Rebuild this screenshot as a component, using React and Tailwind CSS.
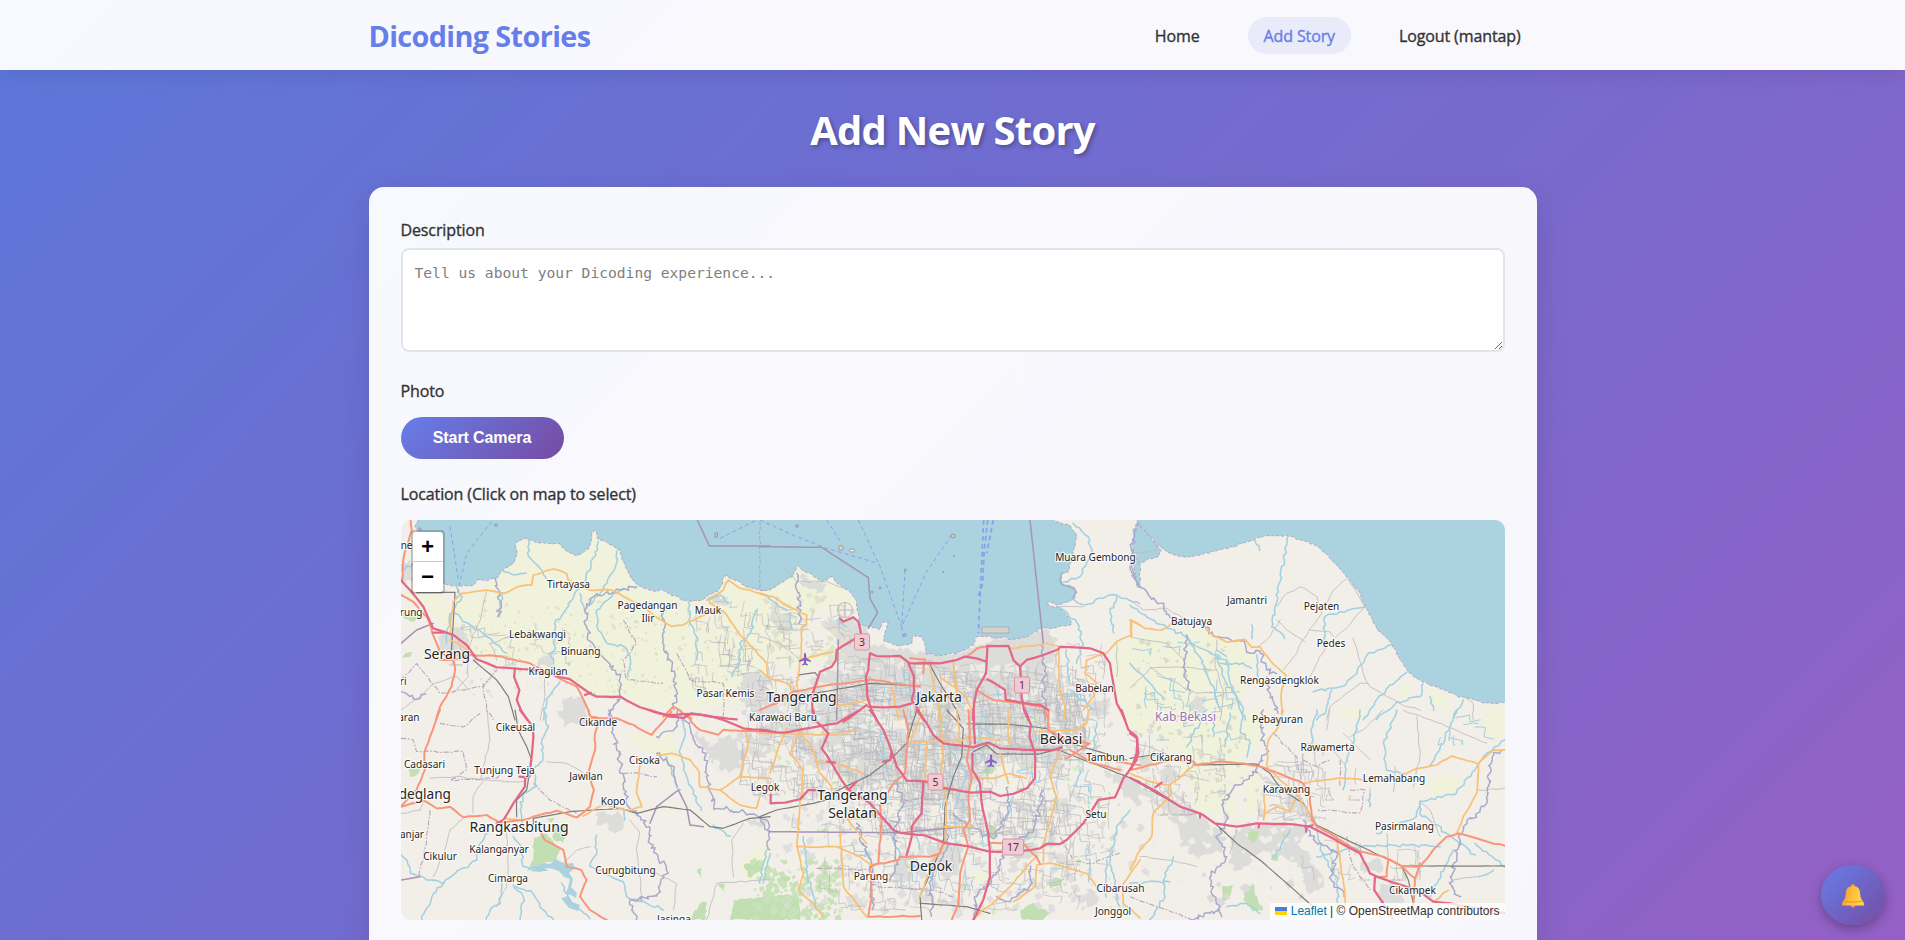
import React from "react";

/* ---------- map geometry: six sheets, three units per pixel ---------- */

const ORIGIN = { A: [390, 510], B: [390, 710], C: [760, 510], D: [760, 710], E: [1130, 510], F: [1130, 710] };

const SEA = {
  A: ["85,30 75,50 90,75 100,110 130,150 160,222 195,228 250,226 262,208 290,213 325,200 340,178 370,160 380,135 377,97 410,85 440,97 510,102 530,122 557,136 580,127 597,115 602,100 605,70 614,60 622,72 622,85 650,97 690,120 700,155 715,190 740,222 760,235 800,243 815,237 845,257 865,260 875,270 905,274 940,268 955,255 985,243 995,225 1000,203 1010,195 1020,205 1040,212 1060,225 1090,237 1110,240 1140,240 1140,20 85,20"],
  C: [
    "0,20 0,241 25,240 70,215 100,198 112,165 125,180 150,190 185,215 215,200 240,225 270,245 285,265 295,310 300,345 320,350 340,352 360,358 368,337 385,336 380,355 370,390 395,400 420,408 455,400 458,376 485,380 495,410 500,432 560,435 600,425 640,405 650,380 690,378 700,385 740,380 745,388 800,382 845,355 890,352 935,342 920,315 895,290 858,285 870,275 890,285 925,275 945,262 942,232 905,222 905,190 925,185 930,160 945,110 950,80 930,45 885,35 885,20",
    "1140,30 1118,60 1128,95 1110,150 1122,170 1130,230 1140,232",
  ],
  E: [
    "22,35 60,80 100,118 130,134 165,141 210,135 265,120 310,110 375,87 400,78 475,78 550,102 580,125 620,165 655,205 690,250 705,290 740,355 785,400 810,450 835,487 875,515 930,535 980,558 1020,565 1060,580 1130,577 1130,20 22,20",
    "22,40 5,100 10,130 28,160 50,150 85,140 95,122 60,80",
  ],
};

const FARM = {
  A: ["190,255 290,235 325,200 340,178 375,155 380,97 410,87 510,102 557,136 597,115 614,62 690,120 740,222 800,243 905,274 985,243 1010,197 1060,225 1140,240 1140,500 1040,520 1040,590 860,600 750,590 690,560 600,550 520,500 420,455 250,430 200,375", "33,250 160,250 180,350 140,330 90,270 33,262"],
  B: ["720,70 840,75 870,130 840,200 800,130 740,110", "1050,480 1110,400 1140,400 1140,500 1080,510"],
  C: ["0,241 70,215 112,170 150,190 240,225 290,280 230,300 190,290 110,350 115,500 60,450 0,470", "120,440 220,390 230,420 130,492", "1060,390 1140,400 1140,630 1090,630 1060,520"],
  D: ["660,140 710,140 720,180 680,205", "640,490 680,480 690,510 650,520", "1080,0 1140,0 1140,60 1100,50"],
  E: ["0,380 50,370 150,370 210,350 260,390 345,400 380,440 330,480 360,530 330,560 340,600 380,630 0,630", "40,215 80,195 85,220 50,232", "800,535 840,515 840,550 805,565", "900,540 960,555 950,600 910,590", "1060,590 1125,585 1125,630 1070,630"],
  F: ["0,0 400,0 390,100 330,130 360,180 300,230 330,330 200,300 160,200 100,80 0,60", "900,210 980,190 980,250 890,265", "1060,40 1125,0 1125,70 1080,100", "350,200 400,190 390,300 345,320", "620,0 720,0 690,30 640,20"],
};

const URBAN = {
  A: ["33,150 62,150 75,215 33,215", "150,370 225,345 235,400 240,440 200,440 150,420", "450,445 490,435 495,475 450,470", "520,565 575,560 590,595 560,630 520,630", "1050,520 1070,495 1110,480 1140,510 1140,630 1070,630 1050,580", "970,250 1015,260 1005,285 965,280"],
  B: ["500,0 580,0 590,35 520,50", "615,315 690,305 700,340 680,370 655,345 625,345", "900,60 980,85 1060,70 1080,110 1060,180 1000,190 940,120", "980,80 1140,60 1140,130 1080,150", "1060,330 1130,330 1110,365", "1100,180 1140,170 1140,280 1110,260"],
  C: ["125,188 175,215 205,225 190,250 130,230", "190,330 300,330 330,400 500,432 600,430 700,385 850,360 890,380 880,450 900,520 880,560 920,630 420,630 0,630 0,570 110,530 180,490 240,410", "30,290 90,310 95,370 50,350", "1000,570 1050,560 1050,610 970,630"],
  D: ["0,0 300,0 380,60 640,0 960,0 930,60 900,100 930,130 900,180 860,220 840,130 800,200 750,130 640,240 610,330 570,260 440,310 400,200 320,250 240,200 180,180 100,160 60,60 0,110", "500,400 560,400 610,420 600,480 560,520 530,470", "400,460 440,455 455,510 410,525", "740,400 830,400 820,440 770,460", "1030,180 1140,215 1140,290 1090,250", "980,540 1010,545 1010,590 980,590"],
  E: ["200,555 225,560 225,600 190,630 180,580"],
  F: ["0,205 80,240 130,270 200,310 270,355 280,420 210,445 150,400 130,340 60,260 0,240", "20,140 60,135 60,180 30,180", "80,190 115,160 150,200 120,230 170,280 220,320 120,260", "320,355 420,345 530,350 500,400 550,460 570,480 590,530 540,550 500,460 440,440 400,420 340,480 310,490 300,430", "390,190 440,220 500,260 560,320 555,345 500,310 420,240", "740,510 820,530 825,575 760,585", "690,455 755,450 760,480 700,490"],
};

const GREEN = {
  A: ["150,30 190,30 185,42 160,42", "45,430 68,425 60,442 38,445", "33,310 70,305 100,320 60,335"],
  B: ["430,385 470,372 510,415 500,450 460,460 410,482 430,440", "470,325 495,325 480,340", "490,350 530,350 520,400 490,390", "55,180 90,175 80,195 60,200", "920,480 935,475 930,505", "1060,465 1110,450 1120,480 1080,505", "1030,570 1140,560 1140,630 1020,630", "930,580 950,575 945,630 900,630", "985,520 1005,520 1000,545"],
  D: ["0,600 30,560 70,555 115,560 120,630 0,630", "170,350 200,340 200,365 170,365", "780,600 820,580 870,610 850,630 790,630", "860,510 920,500 900,525 870,535", "690,350 710,350 705,385 690,380", "665,165 700,160 700,190 670,200", "60,500 90,500 80,525 60,530", "200,530 235,540 230,560 205,550"],
  F: ["275,530 310,525 300,565 275,580", "345,535 370,520 380,560 400,600 370,605 340,570", "350,365 385,362 380,390 360,400", "460,370 480,365 475,390 455,395", "425,430 445,430 445,455 422,450", "815,485 830,490 828,510"],
};

const RIVER = {
  A: ["415,90 415,140 450,175 470,205", "335,180 370,195 410,190", "625,95 600,180 550,260 520,310 495,340 490,400 495,420 480,430 490,460", "683,120 680,160 640,240 585,300", "195,310 240,345 300,385 350,430", "335,250 328,320", "700,235 670,250 620,300 625,360 650,400 700,410 720,440 715,500", "895,275 900,340 920,380 920,450", "1100,300 1080,370 1050,400 1050,450 1025,500", "180,310 170,400", "510,515 470,570 460,630", "570,250 585,310", "950,270 990,255 1015,280", "200,220 215,260 180,320", "33,180 70,160"],
  B: ["460,0 475,50 455,100 460,140 430,180 440,230 400,250 390,300 395,340", "33,435 50,450 60,490 120,510 160,520 210,480 260,450 270,400 295,370", "160,520 130,550 95,630", "370,380 395,420 400,470 470,480", "335,520 330,580 300,600 290,630", "370,525 400,560 395,600 390,630", "375,530 430,550 450,590 490,630", "515,520 540,570 570,600 600,625", "620,375 615,440 600,470 700,515 710,560 760,575 820,600", "870,0 885,60 870,130 890,200 935,300", "700,295 705,330", "830,140 850,200 870,240", "970,345 1020,380", "1140,430 1120,520"],
  C: ["20,255 55,290 80,300", "905,220 960,200 995,130 985,80 940,40", "895,290 950,340 970,400 950,460", "930,265 975,285 1040,260 1070,255 1140,280", "1070,260 1050,310 1060,370", "90,310 95,360", "920,420 930,520", "230,330 260,350", "930,540 1000,600"],
  D: ["360,60 380,180", "470,380 480,420", "570,120 620,190 590,280", "760,260 740,330", "800,0 830,90", "960,180 950,230", "130,380 140,490 170,600", "20,420 0,520", "1110,300 1070,350 1050,460 1080,590", "1040,450 1040,560", "1010,40 1000,120", "510,460 520,540", "400,380 420,440", "660,40 660,90"],
  E: ["375,90 390,122", "473,80 462,150 435,290 425,350 450,365 465,385", "705,292 650,300 585,320 582,400", "550,545 640,530 680,490 710,435 785,402", "605,540 590,600 560,630", "830,487 780,525 735,580 700,630", "880,520 870,560 800,575 740,630", "0,285 80,340 160,375 210,440 250,530 270,600", "165,380 200,410 290,450 300,520 340,600", "260,420 290,440", "270,460 340,460 365,475", "0,460 60,520 100,565", "365,345 365,385", "380,435 385,500", "260,440 290,520 320,560 345,630", "900,560 910,600", "970,620 1000,570"],
  F: ["340,0 330,60 360,100 350,140", "560,0 545,70 550,110", "690,0 680,60 645,160 640,240", "800,0 760,100 770,180 820,190", "980,0 930,120 900,170", "720,250 720,290", "1125,90 1060,140 980,250 870,275 860,320 740,370", "560,440 690,410 830,405 930,410", "560,350 570,420 620,500 625,610", "480,360 450,420 430,440", "130,440 100,510 105,560 60,630", "0,520 120,515", "290,590 350,580 390,610", "870,280 870,310 990,400 1035,435", "1035,400 1125,470", "1045,500 1090,480", "970,420 920,520 900,560", "255,0 250,80", "300,10 285,110", "230,0 170,110"],
};

const BOUNDARY_RIVER = {
  A: ["740,230 680,240 610,260 585,300 590,350 605,400 640,440 690,500 690,560 665,600 660,630", "820,310 820,390 845,470 860,540 850,600", "315,205 330,250 325,320", "33,545 80,570 105,550"],
  B: ["660,0 670,60 685,130 700,200 715,290 780,350 780,400 830,480 800,560 720,570 740,630", "885,20 910,80 945,140 955,220 970,290 1080,310 1130,330 1140,420", "800,80 860,50 860,0", "800,130 850,170 860,230"],
  C: ["110,190 115,250 118,340", "905,190 905,225 945,240 940,265", "1128,60 1110,150 1130,200", "850,400 855,630"],
  D: ["410,220 430,280 400,360 410,450 390,510", "290,340 310,400 340,480 335,600", "850,240 830,330 800,380 740,410 720,480 650,560 640,630", "560,360 560,420 510,500 515,620", "580,310 620,350 700,385 740,320 745,230", "710,560 750,575 815,520 810,470", "0,320 30,365"],
  E: ["0,170 20,220 55,250 100,290 120,325", "215,345 250,375 345,400 350,425 390,420 410,480 440,490", "410,500 420,550 445,610", "170,375 160,470 180,540"],
  F: ["400,0 395,70 410,130 370,195 310,230 280,280 290,330 260,380 290,440 240,500 260,580 275,620", "1115,120 1085,140 1070,280 1000,350 980,430 960,520 990,560", "520,330 550,390 620,430 600,500 640,560", "190,630 270,600"],
};

const ADMIN = {
  A: ["922,30 958,108 1140,108", "33,400 80,360 130,340"],
  C: ["0,110 185,112 325,203 330,265 353,308 325,355", "810,30 850,400", "230,630 235,390"],
  B: ["780,340 800,290 865,240 890,290 900,345 940,350", "33,510 90,500"],
  D: ["30,365 420,368 620,350"],
};

const ADMIN_DASH = {
  A: ["33,510 80,460 150,550 280,530 320,480", "280,520 290,600 310,630", "700,330 740,400 700,450 710,510 820,520", "860,430 900,510 1000,520 1000,620"],
  B: ["33,85 70,90 80,125 220,125 230,180 180,210 320,205 350,180", "120,300 110,400 85,500", "430,220 480,270 560,310", "150,40 220,50 270,10", "700,190 750,190 800,200"],
  D: ["170,475 330,480 350,530 430,535 520,540 580,560", "900,380 940,455 1000,460 1080,430", "430,270 520,265"],
  F: ["430,70 500,140 515,220", "630,150 630,230", "660,240 705,240 690,310 560,300", "650,380 670,470 720,540", "0,560 110,600 190,630", "520,150 560,170 600,150"],
};

const RAIL = {
  A: ["80,247 195,247 183,440", "250,450 320,510 355,560 375,630"],
  B: ["375,0 385,60 410,110 425,150 410,240 380,270 380,320", "430,345 430,325 540,305 690,295 740,310 820,290 900,300 960,350 1000,355 1080,325 1140,320"],
  C: ["165,550 330,520 480,528", "115,495 165,488 175,500 160,545", "510,465 540,520 590,600 600,630"],
  D: ["0,320 50,300 160,280 200,270", "215,250 330,195 400,140 440,100 470,0", "605,140 580,200 555,290 550,400 480,560 485,630", "480,580 620,590 690,610", "620,42 740,42 860,55 900,90 1100,150", "560,0 610,55 605,140", "640,125 680,105 710,132 840,132 890,118 1140,215"],
  F: ["0,145 100,130", "190,165 380,162 420,190 455,240 520,280 560,345 620,375 815,468 1125,468", "815,468 835,510 850,580", "0,203 150,290 220,315 255,340 320,400 390,450 550,590"],
};

const PRIMARY = {
  A: ["180,375 185,310 190,275 215,250 290,240 345,250 385,230 425,225 430,195 490,177 530,190 535,210 600,240 665,240 700,260 745,280 790,315 845,350 880,345 930,320 985,295 1010,315 1050,375 1080,405 1130,460 1133,500", "955,265 1000,240 1015,210 1050,235 1080,240 1140,260", "955,265 960,280 990,300", "180,390 250,430"],
  B: ["800,135 845,130 900,150 925,180 930,230 990,240 1050,200 1140,205", "990,240 1050,285 1100,295 1110,260", "1065,60 1075,100 1050,195", "750,165 740,250 755,290 720,300 640,285 580,318", "345,325 400,330"],
  C: ["0,252 40,260 70,280 140,315 140,345 125,350 125,430 110,530", "0,480 30,505 80,520 120,555", "750,415 860,400 900,410", "895,415 900,540 915,590 910,630", "1140,345 1113,330 1115,375 1070,395 1040,430 980,450 975,490 1010,520 1000,560 970,600", "510,470 525,540 545,630", "580,450 590,550", "395,530 410,600 415,630", "120,450 220,425", "540,500 620,560 640,620", "230,590 320,570"],
  D: ["80,55 60,100 30,190", "110,60 150,100 180,190 215,230 215,250", "120,60 90,130 130,180 110,400 130,490 115,540 160,580 190,620", "110,410 230,410 300,440 340,470", "230,325 330,325 350,300", "260,325 320,400", "240,370 250,530 320,620", "0,70 75,70 220,75 290,62", "450,95 600,95 625,80 720,90", "450,95 490,0", "500,95 495,210", "535,0 550,90 545,200 560,270 555,400 520,450 480,560", "745,0 745,100", "820,65 950,60 980,40 985,0", "640,200 700,205 750,190 800,205", "720,130 745,220", "905,110 870,200 890,260 870,340 850,400 850,455", "830,465 870,460 910,470 980,490 1010,530", "1140,450 1090,520 1090,580 1140,625", "830,440 750,530 720,560 640,625", "830,470 825,530 760,575", "550,350 640,350", "180,150 260,170 310,190", "600,100 590,0"],
  E: ["0,330 45,355 95,360 125,340 165,335", "220,345 235,365 290,397 345,388 365,412 390,410 420,450 468,495 455,540 455,610", "2,330 4,380"],
  F: ["460,0 440,60 415,90 410,165", "0,190 60,215 120,225 195,165", "120,225 125,250 70,310 65,380 30,420 0,480", "410,170 455,215 500,250 555,340", "400,240 405,290 400,330", "405,310 440,290 480,305 495,270", "525,220 620,205 700,210 770,215 850,180 920,165 965,138 1045,162 1090,120 1125,120", "1045,162 1040,250 1000,320 980,370", "620,380 630,450 645,560 640,630", "910,575 955,540"],
};

const TRUNK = {
  A: ["62,30 65,60 50,110 40,150 36,215", "33,255 70,275 90,300 110,320 140,400 150,425 190,450 195,480 185,530 150,590 138,630", "150,450 190,450 240,435 320,438 420,460 490,495 560,530 585,580 605,625 640,628", "820,620 850,590 905,625"],
  B: ["150,0 120,80 103,130 105,180 80,240 33,290", "33,290 100,270 140,295 180,290 220,322 290,315 330,340 400,330 500,302 560,322 600,290 612,240 595,190 615,120 615,70 630,25 600,20 595,0", "630,25 680,25 730,45 785,75 845,5", "885,15 930,60 985,75 1000,60 1140,65", "450,360 465,390 520,420 530,470 575,480 590,510 570,560 600,600 650,630"],
  C: ["100,545 180,530 250,520 330,508 420,522 480,530", "0,600 50,580 100,545", "450,445 495,448 490,490", "620,440 650,415 680,410", "650,540 700,570 780,580 850,590 865,630"],
  D: ["430,0 445,60 435,190 410,210 385,245", "865,0 865,60 920,90 990,100 920,145", "930,120 1000,160 1080,180", "360,285 365,330 355,460 330,470 335,560 325,620 480,618", "340,465 415,450 420,440 510,440 540,430 550,400", "625,0 630,100 620,150 635,200 625,260 630,330 610,360 625,410 600,490 595,580 575,630", "690,398 790,400 830,440 840,462", "1070,155 1140,165"],
  F: ["0,180 60,165 130,150 190,155 200,165 260,155 340,160 400,172 470,200 520,220 540,260 545,330 560,350 600,370 680,420 760,440 815,468 855,505 850,590", "815,470 870,470 910,420 950,380 985,370 1060,392 1125,408", "855,505 870,460", "740,500 770,500 775,450"],
};

const MOTORWAY = {
  A: ["33,210 60,240 100,290 130,355 190,375 230,405 260,448 320,472 420,478 490,495 540,508 600,550 620,560 690,560 750,592 840,620 880,624 905,610 960,620 1040,628", "375,475 372,500 388,540 380,570 395,605 412,630", "130,368 160,368", "585,555 602,548"],
  B: ["780,0 830,15 905,12 960,18 1000,30 1060,55 1140,62", "390,0 428,50 430,80 418,200 405,205 405,230 370,280 340,330 320,340", "388,200 410,202"],
  C: ["240,325 250,335 280,322 295,335 303,375 270,395 230,420 228,450 215,470 180,485 175,500 165,530 155,560 160,630", "330,430 325,480 318,500 322,560 335,600 350,630", "330,430 350,438 420,438 450,460 540,460 590,450 615,440 650,445 680,455 682,408 745,408 760,450 780,470 800,450 850,435 895,418 900,410 990,415 1030,430 1050,460 1060,520 1070,580 1095,630", "445,460 462,500 462,545 455,570 470,590 490,630", "455,580 420,590 360,592 325,590", "680,458 678,490 650,540 642,580 638,630", "682,508 735,540 737,570 785,578 840,585 865,600", "780,470 785,560 792,600 805,630", "320,585 300,600 250,635"],
  D: ["0,62 75,68 160,52 230,40 300,0", "470,0 500,40 520,75 550,100 590,105 640,112 660,105 685,98 720,115 800,120 880,120 905,112", "640,0 645,100", "795,0 812,45 808,80 825,130 825,205 800,235 760,252 720,258 690,245 635,248 555,235 500,215 440,212 410,170 395,125 370,60 330,0", "160,0 165,30 205,70 185,115 215,160 245,210 265,240 300,260 330,280 365,320 400,360 420,368 490,375 560,400 630,410 690,425 760,425 840,415 860,402 900,402 920,390 970,340 1015,270 1065,262 1090,205 1130,150", "32,255 32,280 75,278 120,268 145,240 190,242", "490,215 485,310 455,350 455,380 440,435", "637,130 637,180 660,220 665,280 685,370 690,440 690,500 670,570 640,630", "265,240 290,215", "395,125 390,150 370,155", "1085,0 1105,60 1130,80 1135,130 1125,155", "202,155 225,158"],
  F: ["0,70 22,85 20,130 5,175", "0,203 80,245 150,290 220,315 255,340 320,350 380,340 490,343 540,350 570,365 690,430 720,490 740,500 790,518 830,530 870,545 910,575 960,580 1125,610", "735,500 733,540 760,580 790,630", "75,232 95,218", "210,315 210,322", "388,342 386,352", "528,365 530,350 548,346"],
};

const FERRY = {
  A: ["305,35 230,130 200,260", "180,50 205,210", "990,85 1100,30"],
  C: ["0,30 110,80 200,115 355,160", "200,30 245,100", "295,30 360,170 425,350", "435,180 425,350", "575,75 500,185 425,350 430,390"],
};

const FERRY_BOLD = { C: ["671,30 663,200 655,370", "683,30 672,130 668,220 655,260", "700,30 680,130"] };

const MINOR = {
  A: ["290,245 270,330 245,390 230,430", "33,600 90,560 130,520 200,500 235,540", "360,380 300,400 320,450", "230,450 235,500 190,550", "465,500 465,560 450,630"],
  B: ["290,0 300,90 280,170 270,210", "470,155 530,160 590,195", "120,205 200,200 290,210 400,215", "33,310 90,300 100,270", "220,325 180,360 160,430 130,500", "345,350 355,430 350,530 320,590", "600,410 560,420 520,460", "720,330 750,370 740,420 755,560", "1060,340 1025,390 1030,500", "1140,510 980,520 950,630", "280,215 250,260 250,310", "760,470 860,520 850,600"],
  C: ["0,380 60,400 120,450", "70,170 110,215 200,215 260,240", "1070,400 1070,500", "900,290 970,290"],
  E: ["440,290 470,250 510,230 560,260 575,310 520,390 500,430 460,480", "650,207 610,240 585,285", "655,210 705,290 670,330 630,370 590,410 560,460 540,500", "440,330 470,360 525,395", "450,330 420,380 390,405", "540,360 600,365 610,380", "668,385 685,440 700,490 720,530 830,590 870,600", "590,630 600,590 690,520 715,520", "0,380 110,400 165,450 160,500", "0,535 60,475 140,470 260,480", "60,470 100,500 200,550 330,545", "260,390 255,470 280,540 270,630", "0,270 40,300 110,295 160,325", "5,130 80,120 75,95", "1000,560 1030,580 1030,630"],
  F: ["590,60 600,0", "640,70 720,150", "820,0 950,50 1070,100", "795,170 790,245", "860,20 870,140 850,230", "870,275 900,300 930,380", "1045,240 1125,235", "690,400 700,460", "520,100 600,110 640,160", "0,90 150,150", "30,440 120,450 200,470", "760,0 700,60 660,80", "770,370 775,440", "970,510 1040,500", "320,360 300,430"],
};

/* ---------- deterministic detail ---------- */

const randomizer = (seed) => {
  let s = seed;
  return () => {
    s = (s * 1664525 + 1013904223) % 4294967296;
    return s / 4294967296;
  };
};

const parse = (str) => str.split(" ").map((p) => p.split(",").map(Number));

const wiggle = (str, amp, step, close) => {
  const pts = parse(str);
  const rnd = randomizer(Math.round(pts[0][0] * 31 + pts[0][1] * 17 + pts.length * 7));
  if (close) pts.push(pts[0]);
  let d = `M${pts[0][0]} ${pts[0][1]}`;
  for (let i = 1; i < pts.length; i++) {
    const [ax, ay] = pts[i - 1];
    const [bx, by] = pts[i];
    const n = Math.max(1, Math.round(Math.hypot(bx - ax, by - ay) / step));
    for (let k = 1; k <= n; k++) {
      const t = k / n;
      const j = k === n ? 0.3 : 1;
      const x = ax + (bx - ax) * t + (rnd() - 0.5) * amp * j;
      const y = ay + (by - ay) * t + (rnd() - 0.5) * amp * j;
      d += `L${x.toFixed(1)} ${y.toFixed(1)}`;
    }
  }
  return close ? d + "Z" : d;
};

const streets = (seed, x, y, w, h, n) => {
  const rnd = randomizer(seed);
  let d = "";
  for (let i = 0; i < n; i++) {
    let px = x + rnd() * w;
    let py = y + rnd() * h;
    const upright = rnd() > 0.42;
    d += `M${px.toFixed(1)} ${py.toFixed(1)}`;
    const turns = 2 + Math.floor(rnd() * 4);
    for (let k = 0; k < turns; k++) {
      const along = 3 + rnd() * 9;
      const cross = (rnd() - 0.5) * 5;
      const flip = k % 3 === 2;
      if (upright !== flip) {
        px += cross;
        py += along;
      } else {
        px += along;
        py += cross;
      }
      px = Math.min(px, x + w);
      py = Math.min(py, y + h);
      d += `L${px.toFixed(1)} ${py.toFixed(1)}`;
    }
  }
  return d;
};

const specks = (seed, x, y, w, h, n, size) => {
  const rnd = randomizer(seed);
  let d = "";
  for (let i = 0; i < n; i++) {
    const px = x + rnd() * w;
    const py = y + rnd() * h;
    const s = size * (0.4 + rnd());
    d += `M${px.toFixed(1)} ${py.toFixed(1)}l${s.toFixed(1)} ${(-s * rnd()).toFixed(1)}l${(s * rnd()).toFixed(1)} ${s.toFixed(1)}l${(-s).toFixed(1)} ${(s * 0.6).toFixed(1)}z`;
  }
  return d;
};

function Layer({ data, amp = 0, step = 18, close = false, ...rest }) {
  return (
    <g strokeLinejoin="round" strokeLinecap={rest.strokeDasharray ? "butt" : "round"} fill={close ? rest.fill : "none"} {...rest}>
      {Object.entries(data).map(([key, lines]) => (
        <g key={key} transform={`translate(${ORIGIN[key][0]} ${ORIGIN[key][1]}) scale(0.33333)`}>
          {lines.map((l, i) => (
            <path key={i} d={wiggle(l, amp, step, close)} />
          ))}
        </g>
      ))}
    </g>
  );
}

const TOWNS = [
  [568.5, 587.5, "Tirtayasa"], [647.5, 609, "Pagedangan"], [648, 622, "Ilir"], [708, 614, "Mauk"],
  [537.5, 638, "Lebakwangi"], [580.5, 654.5, "Binuang"], [548, 674.5, "Kragilan"], [725.5, 697, "Pasar Kemis"],
  [515.5, 730.5, "Cikeusal"], [598, 726, "Cikande"], [424.5, 767.5, "Cadasari"], [504.5, 773.5, "Tunjung Teja"],
  [586, 780, "Jawilan"], [644.5, 764, "Cisoka"], [613, 804.5, "Kopo"], [499, 853, "Kalanganyar"],
  [440, 860, "Cikulur"], [508, 881.5, "Cimarga"], [625.5, 874, "Curugbitung"], [674, 923, "Jasinga"],
  [765, 791, "Legok"], [783, 720.5, "Karawaci Baru"], [871, 880, "Parung"], [1095.5, 560.5, "Muara Gembong"],
  [1094.5, 691.5, "Babelan"], [1105.5, 760.5, "Tambun"], [1096, 817.5, "Setu"], [1120.5, 891.5, "Cibarusah"],
  [1113, 915, "Jonggol"], [1191.5, 624.5, "Batujaya"], [1247, 604, "Jamantri"], [1321.5, 609.5, "Pejaten"],
  [1331, 647, "Pedes"], [1279.5, 684, "Rengasdengklok"], [1277.5, 723, "Pebayuran"], [1327.5, 750.5, "Rawamerta"],
  [1171, 760.5, "Cikarang"], [1286.5, 792.5, "Karawang"], [1394, 782, "Lemahabang"], [1404.5, 830, "Pasirmalang"],
  [1412.5, 893.5, "Cikampek"],
];
const EDGE_TOWNS = [[412.5, 549, "ne"], [422.5, 616, "rung"], [406.5, 685, "ri"], [419.5, 720.5, "aran"], [424, 837.5, "anjar"]];
const CITIES = [[447, 658.5, "Serang"], [801.5, 702, "Tangerang"], [939, 702, "Jakarta"], [1061, 744, "Bekasi"], [852.5, 800, "Tangerang"], [852.5, 818, "Selatan"], [931, 871, "Depok"], [519, 832, "Rangkasbitung"]];
const SHIELDS = [[862, 642, "3", 16], [1022, 685, "1", 16], [935.5, 782, "5", 16], [1013, 847, "17", 22]];

function Plane({ x, y }) {
  return (
    <path
      transform={`translate(${x} ${y})`}
      fill="#8461c4"
      d="M0-6.5Q1.1-6 1.1-3.5V-1.2L6 1.8V3.1L1.1 1.6V4.2L3 5.6V6.5L0 5.7L-3 6.5V5.6L-1.1 4.2V1.6L-6 3.1V1.8L-1.1-1.2V-3.5Q-1.1-6 0-6.5Z"
    />
  );
}

function MapCanvas() {
  return (
    <svg className="block h-full w-full" viewBox="401 520 1104 400" preserveAspectRatio="none">
      <rect x="400" y="519" width="1106" height="402" fill="#f2efe9" />
      <Layer data={FARM} close amp={9} step={14} fill="#f0f2db" />
      <Layer data={URBAN} close amp={20} step={9} fill="#dcdcdb" />
      <Layer data={GREEN} close amp={7} step={10} fill="#c2dfb3" />
      <path d={specks(5, 460, 600, 280, 95, 260, 2)} fill="#dfe0cf" />
      <path d={specks(15, 760, 595, 90, 70, 90, 4)} fill="#e2e3cf" />
      <path d={specks(25, 1130, 640, 110, 160, 140, 3)} fill="#dcdccb" />
      <path d={specks(7, 770, 660, 300, 170, 420, 6)} fill="#f0ede6" opacity="0.9" />
      <path d={specks(17, 690, 700, 90, 110, 120, 5)} fill="#f0ede6" />
      <path d={specks(18, 1130, 770, 220, 110, 160, 4)} fill="#f0ede6" />
      <path d={specks(8, 780, 790, 300, 120, 240, 5)} fill="#dedddb" opacity="0.9" />
      <path d={specks(9, 765, 700, 330, 210, 110, 3)} fill="#d3ebc0" />
      <path d={specks(10, 1060, 720, 90, 190, 70, 4)} fill="#dfdedc" />
      <path d={specks(11, 745, 860, 90, 60, 150, 4)} fill="#c9e2ba" />
      <path d={specks(12, 1200, 790, 100, 110, 30, 5)} fill="#dddcda" />
      <Layer data={SEA} close amp={5} step={9} fill="#aad3df" stroke="#a99bb9" strokeWidth="2.4" strokeDasharray="10 5" />
      <path d="M530 871l6-5 8-3 6 1 6-5 5 3 5 2 7-1 2 5-6 5 4 6-2 8 6 6-1 5-5-3-6-1 3-6 2-9-6-2-5-6-6-2-6-1-6 4z" fill="#aad3df" />
      <path d="M561 898l8-2 3 6 8 3-2 6-9-3z" fill="#aad3df" />
      <rect x="982" y="627" width="27" height="6" fill="#d5d3ca" stroke="#a99bb9" strokeWidth="0.7" />
      <g fill="none" stroke="#bdbdc0" strokeWidth="0.7">
        <path d={streets(21, 905, 662, 180, 88, 230)} />
        <path d={streets(22, 790, 690, 160, 110, 220)} />
        <path d={streets(23, 860, 735, 210, 100, 220)} />
        <path d={streets(24, 835, 655, 80, 45, 60)} />
        <path d={streets(26, 740, 675, 60, 120, 60)} />
        <path d={streets(27, 820, 800, 260, 110, 120)} />
        <path d={streets(28, 1055, 640, 50, 120, 60)} />
        <path d={streets(29, 1145, 735, 80, 80, 40)} />
        <path d={streets(30, 1255, 760, 70, 60, 30)} />
        <path d={streets(31, 440, 625, 130, 40, 20)} />
        <path d={streets(32, 690, 600, 100, 80, 34)} />
        <path d={streets(33, 765, 600, 85, 50, 26)} />
        <path d={streets(34, 1050, 780, 60, 100, 25)} />
        <path d={streets(35, 1300, 830, 120, 50, 18)} />
      </g>
      <g fill="none" stroke="#a9a0c0" strokeWidth="0.9" opacity="0.6">
        <path d={streets(41, 790, 670, 270, 160, 60)} />
        <path d={streets(42, 690, 610, 80, 80, 18)} />
        <path d={streets(43, 1290, 740, 80, 60, 14)} />
      </g>
      <g fill="none" stroke="#a3cfe0" strokeWidth="1">
        <path d={streets(51, 850, 670, 240, 220, 60)} />
        <path d={streets(52, 1130, 640, 110, 100, 18)} />
        <path d={streets(53, 1440, 715, 60, 30, 8)} />
      </g>
      <circle cx="845" cy="610" r="7.500" fill="none" stroke="#b9b9bb" />
      <path d="M837.500 610h15M845 602.500v15" stroke="#b9b9bb" />
      <Layer data={MINOR} amp={5} stroke="#bfbcbe" strokeWidth="2.6" />
      <Layer data={ADMIN_DASH} amp={6} stroke="#bba6bf" strokeWidth="3.4" strokeDasharray="16 5 5 5" />
      <Layer data={RIVER} amp={9} step={11} stroke="#a3d0e1" strokeWidth="4.6" />
      <Layer data={BOUNDARY_RIVER} amp={15} step={8} stroke="#a9a9cb" strokeWidth="4.4" />
      <Layer data={ADMIN} amp={0} stroke="#a793b3" strokeWidth="4.5" />
      <Layer data={FERRY} stroke="#8099ea" strokeWidth="2.6" strokeDasharray="12 9" />
      <Layer data={FERRY_BOLD} stroke="#86a0ea" strokeWidth="5" strokeDasharray="14 10" />
      <Layer data={RAIL} amp={1} stroke="#7f7d7b" strokeWidth="3.6" />
      <Layer data={PRIMARY} amp={4} stroke="#f9c176" strokeWidth="5.2" />
      <Layer data={TRUNK} amp={3} stroke="#f9967a" strokeWidth="6" />
      <Layer data={MOTORWAY} amp={2} step={26} stroke="#e56786" strokeWidth="6.8" />
      <g fill="none" stroke="#9b8cab" strokeWidth="0.9">
        <circle cx="953" cy="536" r="2" fill="#cfcfb0" /><circle cx="841" cy="548" r="2.4" fill="#d7d9b5" />
        <ellipse cx="852" cy="550.5" rx="2.6" ry="1.6" fill="#f2efe9" /><circle cx="797" cy="526" r="1.4" />
        <circle cx="905" cy="570" r="1" /><circle cx="872" cy="592" r="1" /><circle cx="880" cy="588" r="1" />
        <circle cx="954" cy="556" r=".6" /><circle cx="943" cy="572" r=".6" /><rect x="715" y="533" width="2.4" height="4" />
        <circle cx="905" cy="635" r="1.4" /><circle cx="420" cy="529" r="1.2" /><circle cx="496" cy="525" r="1.3" />
      </g>
      <Plane x={805} y={659} />
      <Plane x={991} y={760.5} />
      {SHIELDS.map(([x, y, t, w]) => (
        <g key={t}>
          <rect x={x - w / 2 + 0.5} y={y - 8} width={w - 1} height="16" rx="1.6" fill="#edccd3" stroke="#d994a6" />
          <text x={x} y={y + 4} textAnchor="middle" fontFamily="Noto Sans, sans-serif" fontSize="10.5" fill="#75203f">{t}</text>
        </g>
      ))}
      <g fontFamily="Noto Sans, sans-serif" textAnchor="middle" fill="#262626" stroke="#ffffff" strokeOpacity="0.75" strokeWidth="2.4" strokeLinejoin="round" style={{ paintOrder: "stroke" }}>
        {TOWNS.map(([x, y, t]) => (
          <text key={t} x={x} y={y} fontSize="10.1">{t}</text>
        ))}
        {EDGE_TOWNS.map(([x, y, t]) => (
          <text key={t} x={x} y={y} fontSize="10" textAnchor="end">{t}</text>
        ))}
        {CITIES.map(([x, y, t]) => (
          <text key={t + y} x={x} y={y} fontSize="14">{t}</text>
        ))}
        <text x="451" y="799" fontSize="13.6" textAnchor="end">deglang</text>
        <text x="1185.5" y="720.5" fontSize="12" fill="#9c72a6">Kab Bekasi</text>
      </g>
    </svg>
  );
}

function Bell() {
  return (
    <svg className="h-6 w-[22px]" viewBox="0 0 22 24">
      <defs>
        <linearGradient id="bell" x1="0" x2="1" y1="0" y2="0.25">
          <stop offset="0" stopColor="#ee9230" />
          <stop offset="0.5" stopColor="#fdbb38" />
          <stop offset="1" stopColor="#ffd54c" />
        </linearGradient>
      </defs>
      <circle cx="11" cy="21.4" r="2.3" fill="#f0807a" />
      <circle cx="11" cy="1.6" r="1.5" fill="#f5a93a" />
      <path fill="url(#bell)" d="M11 2C6 2 4 5 3.800 9.500C3.700 13 3 15 1.200 16.800Q0 18 0 21.600H22Q22 18 20.800 16.800C19 15 18.300 13 18.200 9.500C18 5 16 2 11 2Z" />
      <path fill="#f39c2e" d="M1.800 16.500Q11 18.600 20.200 16.500L21.200 17.800Q11 20 0.800 17.800Z" />
    </svg>
  );
}

const UI = "font-['Open_Sans','Noto_Sans',sans-serif]";
const MEDIUM = "font-medium tracking-[-0.12px] [-webkit-text-stroke:0.35px_currentColor]";
const LABEL = `block text-base leading-[25.6px] text-[#333333] ${MEDIUM}`;

export default function App() {
  return (
    <div className={`relative h-[940px] overflow-hidden bg-[linear-gradient(135deg,#5c77d9_0%,#6c6ed2_32%,#7a69cc_62%,#9560c6_100%)] ${UI}`}>
      <header className="relative h-[70px] bg-[linear-gradient(135deg,#f7f9fe,#f8f8fd_40%,#f9f8fd)] shadow-[0_2px_20px_rgba(0,0,0,0.1)]">
        <div className="mx-auto flex h-full w-[1168px] items-center justify-between">
          <div className="pt-0.5 text-[28.8px] font-bold tracking-[-0.62px] whitespace-nowrap text-[#667eea]">Dicoding Stories</div>
          <nav className={`flex items-center gap-8 text-base text-[#333333] ${MEDIUM}`}>
            <a className="rounded-[20px] px-4 pt-[9px] pb-[7px] leading-[21px]">Home</a>
            <a className="rounded-[20px] bg-[#e9ebfa] px-4 pt-[9px] pb-[7px] leading-[21px] text-[#667eea]">Add Story</a>
            <a className="rounded-[20px] px-4 pt-[9px] pb-[7px] leading-[21px]">Logout (mantap)</a>
          </nav>
        </div>
      </header>
      <main className="mx-auto w-[1168px] pt-[29px]">
        <h1 className="text-center text-[40px] leading-[61px] font-bold tracking-[-0.75px] text-white [text-shadow:2px_2px_4px_rgba(0,0,0,0.3)]">Add New Story</h1>
        <form className="mt-[27px] h-[900px] rounded-[15px] bg-[linear-gradient(135deg,#f6f9fe,#f9f8fd_35%,#f7f6fc)] p-8 shadow-[0_8px_32px_rgba(0,0,0,0.1)]">
          <label className={`${LABEL} -mt-px`}>Description</label>
          <textarea
            className="mt-1 block h-[104px] w-full resize-y rounded-lg border-2 border-[#e1e5e9] bg-white p-3 font-['DejaVu_Sans_Mono',monospace] text-[14.610px] placeholder:text-[#808080]"
            placeholder="Tell us about your Dicoding experience..."
          />
          <label className={`${LABEL} mt-[27px]`}>Photo</label>
          <button type="button" className="mt-[13px] block h-[42px] w-[163px] rounded-[25px] bg-[linear-gradient(135deg,#667eea,#764ba2)] font-['Liberation_Sans',sans-serif] text-base font-bold tracking-[-0.1px] text-white">Start Camera</button>
          <label className={`${LABEL} mt-[23px]`}>Location (Click on map to select)</label>
          <div className="relative mt-[12px] h-[400px] overflow-hidden rounded-[10px]">
            <MapCanvas />
            <div className="absolute top-[10px] left-[10px] rounded border-2 border-black/20 bg-clip-padding font-['Liberation_Mono',monospace] text-[22px] font-bold text-black">
              <div className="h-[30px] w-[30px] rounded-t-sm border-b border-[#cccccc] bg-white text-center leading-[34px]">+</div>
              <div className="h-[30px] w-[30px] rounded-b-sm bg-white text-center leading-[34px]">−</div>
            </div>
            <div className="absolute right-0 bottom-0 flex h-[17px] items-center bg-white/80 px-[5px] font-['Liberation_Sans',sans-serif] text-xs whitespace-pre text-[#333333]">
              <svg className="mr-1 h-2 w-3" viewBox="0 0 12 8">
                <path fill="#4c7be1" d="M0 0h12v4H0z" />
                <path fill="#ffd500" d="M0 4h12v4H0z" />
              </svg>
              <span className="text-[#0078a8]">Leaflet</span> | © OpenStreetMap contributors
            </div>
          </div>
        </form>
      </main>
      <button className="absolute top-[865px] left-[1821px] flex h-[60px] w-[64px] items-center justify-center rounded-[50%] bg-[linear-gradient(135deg,#667eea,#764ba2)] pt-0.5 shadow-[0_4px_12px_rgba(0,0,0,0.3)]">
        <Bell />
      </button>
    </div>
  );
}
